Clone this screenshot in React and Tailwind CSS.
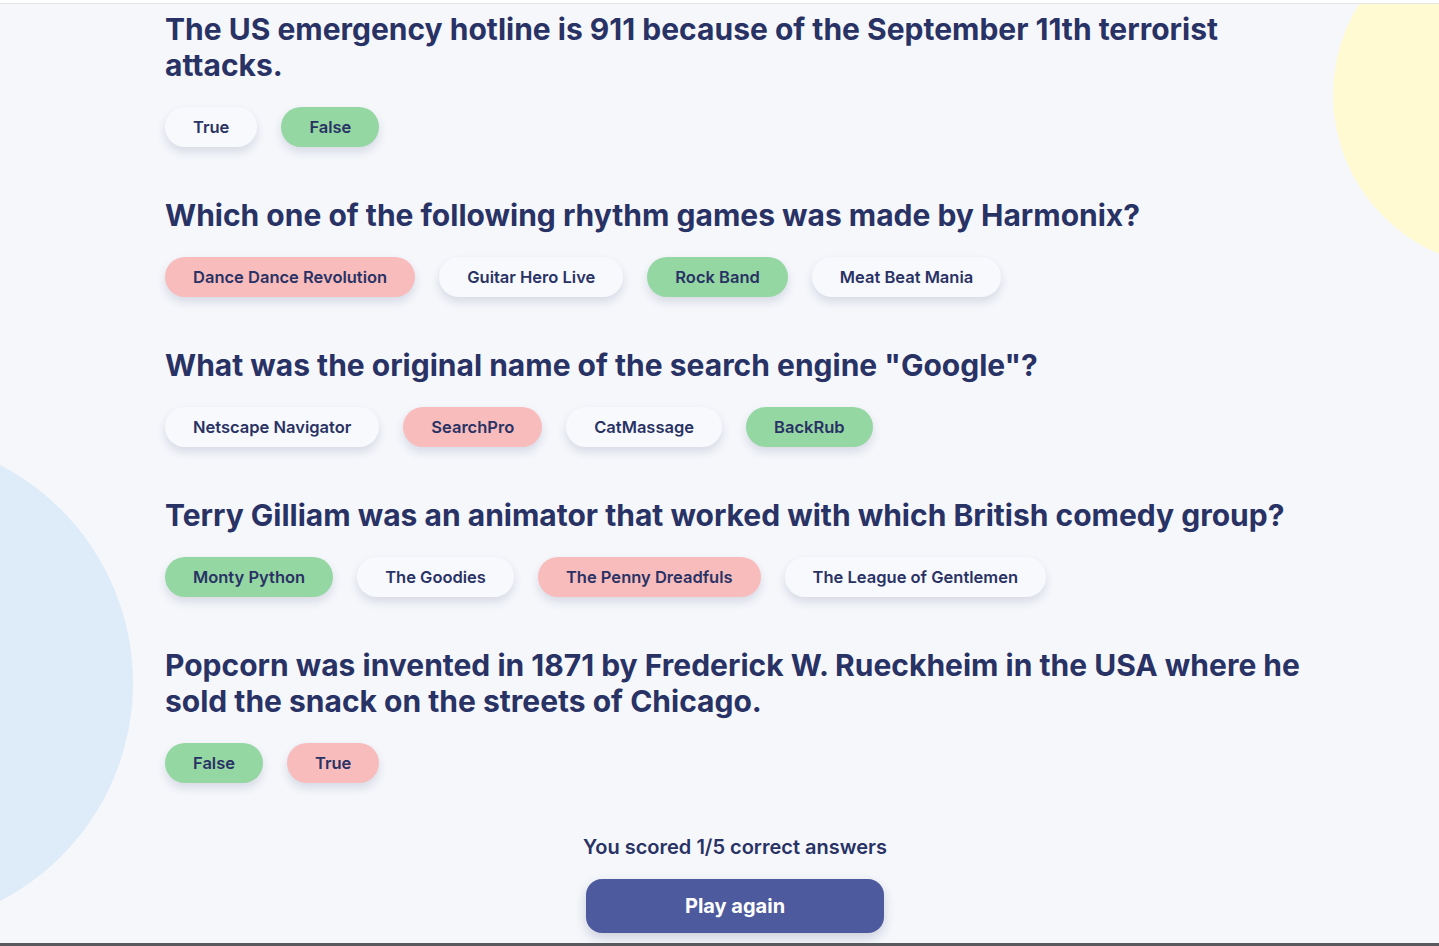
const questions = [
  {
    text: 'The US emergency hotline is 911 because of the September 11th terrorist attacks.',
    answers: [
      { label: 'True', state: 'none' },
      { label: 'False', state: 'correct' },
    ],
  },
  {
    text: 'Which one of the following rhythm games was made by Harmonix?',
    answers: [
      { label: 'Dance Dance Revolution', state: 'wrong' },
      { label: 'Guitar Hero Live', state: 'none' },
      { label: 'Rock Band', state: 'correct' },
      { label: 'Meat Beat Mania', state: 'none' },
    ],
  },
  {
    text: 'What was the original name of the search engine "Google"?',
    answers: [
      { label: 'Netscape Navigator', state: 'none' },
      { label: 'SearchPro', state: 'wrong' },
      { label: 'CatMassage', state: 'none' },
      { label: 'BackRub', state: 'correct' },
    ],
  },
  {
    text: 'Terry Gilliam was an animator that worked with which British comedy group?',
    answers: [
      { label: 'Monty Python', state: 'correct' },
      { label: 'The Goodies', state: 'none' },
      { label: 'The Penny Dreadfuls', state: 'wrong' },
      { label: 'The League of Gentlemen', state: 'none' },
    ],
  },
  {
    text: 'Popcorn was invented in 1871 by Frederick W. Rueckheim in the USA where he sold the snack on the streets of Chicago.',
    answers: [
      { label: 'False', state: 'correct' },
      { label: 'True', state: 'wrong' },
    ],
  },
];

const stateClass = {
  none: 'bg-[#f8f9fc]',
  correct: 'bg-[#94d7a2]',
  wrong: 'bg-[#f8bcbc]',
};

function Answer({ label, state }) {
  return (
    <button
      type="button"
      className={`h-10 rounded-full px-7 text-[16.5px] font-semibold text-[#293264] shadow-[0_5px_10px_rgba(41,50,100,0.14)] ${stateClass[state]}`}
    >
      {label}
    </button>
  );
}

export default function App() {
  return (
    <div
      className="relative h-[946px] w-full overflow-hidden bg-[#f5f7fb] text-[#293264]"
      style={{ fontFamily: 'Inter, "Noto Sans", sans-serif' }}
    >
      {/* decorative blobs */}
      <div className="absolute left-[1333px] top-[-77px] h-[344px] w-[344px] rounded-full bg-[#fffad1]" />
      <div className="absolute left-[-357px] top-[438px] h-[490px] w-[490px] rounded-full bg-[#deebf8]" />

      <div className="relative flex h-full flex-col">
        <div className="h-[3px] bg-white" />
        <div className="h-px bg-[#e3e4e8]" />

        <div className="ml-[165px] flex w-[1140px] flex-1 flex-col pt-[7px]">
          {questions.map((q, i) => (
            <section key={i} className="mb-[50px]">
              <h2 className="text-[30px] font-bold leading-[36px]">{q.text}</h2>
              <div className="mt-[24px] flex gap-6">
                {q.answers.map((a) => (
                  <Answer key={a.label} {...a} />
                ))}
              </div>
            </section>
          ))}

          <div className="mt-[2px] flex flex-col items-center">
            <p className="text-[20px] font-semibold leading-6">You scored 1/5 correct answers</p>
            <button
              type="button"
              className="mt-[20px] h-[54px] w-[298px] rounded-2xl bg-[#4d5b9e] text-[20px] font-bold text-white shadow-[0_5px_12px_rgba(41,50,100,0.2)]"
            >
              Play again
            </button>
          </div>
        </div>

        <div className="h-[3px] bg-[#5a5a5e]" />
      </div>
    </div>
  );
}
